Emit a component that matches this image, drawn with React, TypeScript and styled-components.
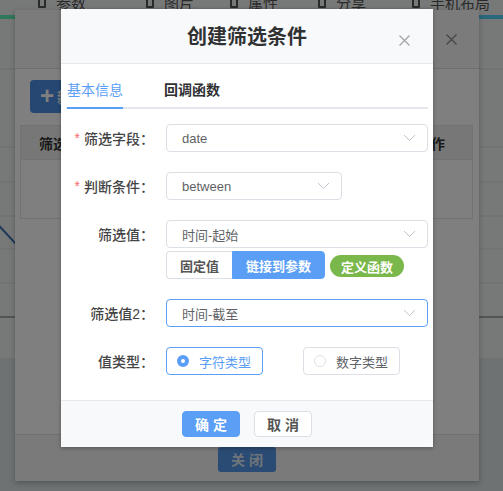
import React from "react";
import styled, { createGlobalStyle } from "styled-components";

const BLUE = "#5a9ef6";
const FONT = `"Liberation Sans", "Noto Sans CJK SC", sans-serif`;

const GlobalStyle = createGlobalStyle`
  html, body { margin: 0; padding: 0; }
  body { font-family: ${FONT}; }
  * { box-sizing: border-box; }
`;

const topTabs = [
  { label: "参数", ml: 38 },
  { label: "图片", ml: 60 },
  { label: "属性", ml: 36 },
  { label: "分享", ml: 40 },
  { label: "手机布局", ml: 46 },
];

const fields = [
  { label: "筛选字段", required: true, value: "date", width: undefined },
  { label: "判断条件", required: true, value: "between", width: 176 },
];

function Chevron() {
  return (
    <ChevronIcon width="13" height="8" viewBox="0 0 13 8">
      <path d="M1 1l5.5 5.5L12 1" fill="none" stroke="#c0c4cc" strokeWidth="1" />
    </ChevronIcon>
  );
}

function CloseIcon({ color }: { color: string }) {
  return (
    <svg width="11" height="11" viewBox="0 0 11 11">
      <path d="M0.5 0.5l10 10M10.5 0.5l-10 10" stroke={color} strokeWidth="1.2" />
    </svg>
  );
}

function App() {
  return (
    <Page>
      <GlobalStyle />
      <TopBar>
        {topTabs.map(t => (
          <TopTab key={t.label} $ml={t.ml}>
            <TopIcon />
            {t.label}
          </TopTab>
        ))}
      </TopBar>
      <ColorBar />
      <ChartArea>
        <svg width="503" height="339" viewBox="0 0 503 339">
          {[50, 128, 163, 197, 230, 264].map(y => (
            <line key={y} x1="0" x2="503" y1={y} y2={y} stroke="#d9dcdc" strokeWidth="1" />
          ))}
          <line x1="0" x2="503" y1="298" y2="298" stroke="#8f9393" strokeWidth="1.5" />
          <path d="M-10 197L15 224L60 250L140 210" fill="none" stroke="#3d6fae" strokeWidth="2" />
        </svg>
      </ChartArea>
      <PageFooter />

      <BackDialog>
        <BackHeader>
          <CloseIcon color="#8a8a8a" />
        </BackHeader>
        <BackBody>
          <AddButton>
            <Plus>+</Plus>新增条件
          </AddButton>
          <Table>
            <TableHead>
              <span>筛选字段</span>
              <span />
              <span>操作</span>
            </TableHead>
            <TableRow />
          </Table>
        </BackBody>
        <BackFooter>
          <CloseButton>关 闭</CloseButton>
        </BackFooter>
      </BackDialog>

      <Mask />

      <Dialog>
        <Header>
          <Title>创建筛选条件</Title>
          <HeaderClose>
            <CloseIcon color="#a0a3a8" />
          </HeaderClose>
        </Header>
        <Body>
          <Tabs>
            <Tab $active>基本信息</Tab>
            <Tab>回调函数</Tab>
          </Tabs>
          <Form>
            {fields.map(f => (
              <Row key={f.label}>
                <Label>
                  {f.required && <Star>*</Star>}
                  {f.label}：
                </Label>
                <Select $width={f.width}>
                  {f.value}
                  <Chevron />
                </Select>
              </Row>
            ))}
            <Row>
              <Label>筛选值：</Label>
              <Stack>
                <Select>
                  时间-起始
                  <Chevron />
                </Select>
                <ButtonLine>
                  <Segment>固定值</Segment>
                  <Segment $active>链接到参数</Segment>
                  <Pill>定义函数</Pill>
                </ButtonLine>
              </Stack>
            </Row>
            <Row>
              <Label>筛选值2：</Label>
              <Select $focused>
                时间-截至
                <Chevron />
              </Select>
            </Row>
            <Row>
              <Label>值类型：</Label>
              <RadioGroup>
                <RadioBox $checked>
                  <RadioDot $checked />
                  字符类型
                </RadioBox>
                <RadioBox>
                  <RadioDot />
                  数字类型
                </RadioBox>
              </RadioGroup>
            </Row>
          </Form>
        </Body>
        <Footer>
          <FooterButton $primary>确 定</FooterButton>
          <FooterButton>取 消</FooterButton>
        </Footer>
      </Dialog>
    </Page>
  );
}

export default App;

const Page = styled.div`
  position: relative;
  width: 503px;
  height: 491px;
  overflow: hidden;
  background: #eff3f3;
  font-family: ${FONT};
`;

const TopBar = styled.div`
  display: flex;
  align-items: center;
  height: 20px;
  margin-top: -8px;
  font-size: 15px;
  color: #555;
`;

const TopTab = styled.div<{ $ml: number }>`
  display: flex;
  align-items: center;
  gap: 10px;
  margin-left: ${p => p.$ml}px;
`;

const TopIcon = styled.span`
  width: 8px;
  height: 12px;
  border: 2px solid #555;
  border-radius: 1px;
`;

const ColorBar = styled.div`
  height: 4px;
  margin-top: 3px;
  background: linear-gradient(90deg, #5ef2b4 0%, #57c9e0 50%, #54d2fb 100%);
`;

const ChartArea = styled.div`
  height: 339px;
  svg {
    display: block;
  }
`;

const PageFooter = styled.div`
  height: 140px;
  background: #dde4e4;
`;

const BackDialog = styled.div`
  position: absolute;
  left: 15px;
  top: 10px;
  width: 464px;
  height: 471px;
  display: flex;
  flex-direction: column;
  background: #fff;
  box-shadow: 0 2px 6px rgba(0, 0, 0, 0.25);
`;

const BackHeader = styled.div`
  height: 59px;
  display: flex;
  align-items: center;
  justify-content: flex-end;
  padding-right: 22px;
  background: #f7f7f7;
  border-bottom: 1px solid #dcdcdc;
`;

const BackBody = styled.div`
  flex: 1;
  padding: 11px 6px 0 5px;
`;

const AddButton = styled.div`
  width: 110px;
  height: 33px;
  margin-left: 10px;
  display: flex;
  align-items: center;
  gap: 3px;
  padding-left: 10px;
  border-radius: 4px;
  background: #4b8ee4;
  color: #fff;
  font-size: 15px;
  font-weight: 700;
`;

const Plus = styled.span`
  font-size: 24px;
  line-height: 1;
  margin-top: -2px;
`;

const Table = styled.div`
  margin-top: 12px;
  border: 1px solid #e4e4e4;
`;

const TableHead = styled.div`
  display: grid;
  grid-template-columns: 110px 1fr 82px;
  align-items: center;
  height: 33px;
  padding-left: 18px;
  background: #eeeeee;
  font-size: 14px;
  font-weight: 700;
  color: #333;

  span:last-child {
    text-align: center;
  }
`;

const TableRow = styled.div`
  height: 59px;
  border-top: 1px solid #e4e4e4;
`;

const BackFooter = styled.div`
  height: 47px;
  display: flex;
  align-items: center;
  justify-content: center;
  padding-top: 2px;
  background: #f5f5f5;
  border-top: 1px solid #e0e0e0;
`;

const CloseButton = styled.div`
  width: 58px;
  height: 25px;
  display: flex;
  align-items: center;
  justify-content: center;
  border-radius: 3px;
  background: #5596e8;
  color: #dfe8f4;
  font-size: 14px;
  font-weight: 700;
`;

const Mask = styled.div`
  position: absolute;
  inset: 0;
  background: rgba(0, 0, 0, 0.5);
`;

const Dialog = styled.div`
  position: absolute;
  left: 61px;
  top: 9px;
  width: 372px;
  height: 438px;
  display: flex;
  flex-direction: column;
  background: #fff;
  box-shadow: 0 1px 4px rgba(0, 0, 0, 0.3);
`;

const Header = styled.div`
  position: relative;
  height: 55px;
  display: flex;
  align-items: center;
  justify-content: center;
  padding-bottom: 2px;
  background: #f8f9fb;
  border-bottom: 1px solid #e6e8ec;
`;

const Title = styled.h1`
  margin: 0;
  font-size: 20px;
  font-weight: 700;
  color: #303133;
`;

const HeaderClose = styled.div`
  position: absolute;
  right: 23px;
  top: 26px;
  display: flex;
`;

const Body = styled.div`
  flex: 1;
  padding: 0 5px;
`;

const Tabs = styled.div`
  display: flex;
  gap: 41px;
  padding-left: 1px;
  border-bottom: 2px solid #e4e7ed;
`;

const Tab = styled.div<{ $active?: boolean }>`
  padding: 16px 0 7px;
  margin-bottom: -2px;
  font-size: 14px;
  line-height: 20px;
  font-weight: ${p => (p.$active ? 400 : 700)};
  color: ${p => (p.$active ? BLUE : "#303133")};
  border-bottom: 2px solid ${p => (p.$active ? BLUE : "transparent")};
`;

const Form = styled.div`
  display: flex;
  flex-direction: column;
  gap: 20px;
  padding-top: 15px;
`;

const Row = styled.div`
  display: grid;
  grid-template-columns: 100px 1fr;
  align-items: start;
`;

const Label = styled.div`
  height: 28px;
  display: flex;
  align-items: center;
  justify-content: flex-end;
  padding-right: 12px;
  font-size: 14px;
  font-weight: 500;
  color: #444;
  white-space: nowrap;
`;

const Star = styled.span`
  margin-right: 4px;
  color: #f56c6c;
  font-weight: 400;
`;

const Select = styled.div<{ $width?: number; $focused?: boolean }>`
  width: ${p => (p.$width ? `${p.$width}px` : "100%")};
  height: 28px;
  display: flex;
  align-items: center;
  padding: 0 11px 0 15px;
  border: 1px solid ${p => (p.$focused ? BLUE : "#dcdfe6")};
  border-radius: 4px;
  font-size: 13px;
  color: #606266;
`;

const ChevronIcon = styled.svg`
  margin-left: auto;
`;

const Stack = styled.div`
  display: flex;
  flex-direction: column;
  gap: 3px;
`;

const ButtonLine = styled.div`
  display: flex;
  align-items: center;
`;

const Segment = styled.div<{ $active?: boolean }>`
  height: 28px;
  display: flex;
  align-items: center;
  padding: 0 13px;
  font-size: 13px;
  font-weight: 700;
  color: ${p => (p.$active ? "#fff" : "#555")};
  background: ${p => (p.$active ? BLUE : "#fff")};
  border: 1px solid ${p => (p.$active ? BLUE : "#dcdfe6")};

  &:first-child {
    border-radius: 4px 0 0 4px;
    border-right: none;
  }
  &:nth-child(2) {
    border-radius: 0 4px 4px 0;
  }
`;

const Pill = styled.div`
  height: 22px;
  margin: 2px 0 0 5px;
  display: flex;
  align-items: center;
  padding: 0 11px;
  border-radius: 11px;
  background: #7ab84b;
  color: #fff;
  font-size: 13px;
  font-weight: 700;
`;

const RadioGroup = styled.div`
  display: flex;
  gap: 40px;
`;

const RadioBox = styled.div<{ $checked?: boolean }>`
  height: 28px;
  display: flex;
  align-items: center;
  gap: 10px;
  padding: 0 11px 0 10px;
  border: 1px solid ${p => (p.$checked ? BLUE : "#dcdfe6")};
  border-radius: 4px;
  font-size: 13px;
  color: ${p => (p.$checked ? BLUE : "#606266")};
`;

const RadioDot = styled.span<{ $checked?: boolean }>`
  width: 12px;
  height: 12px;
  border-radius: 50%;
  background: #fff;
  border: ${p => (p.$checked ? `4px solid ${BLUE}` : "1px solid #dcdfe6")};
`;

const Footer = styled.div`
  height: 47px;
  display: flex;
  align-items: center;
  justify-content: center;
  gap: 14px;
  background: #f8f9fb;
  border-top: 1px solid #e6e8ec;
`;

const FooterButton = styled.div<{ $primary?: boolean }>`
  width: 58px;
  height: 26px;
  display: flex;
  align-items: center;
  justify-content: center;
  border-radius: 4px;
  font-size: 14px;
  font-weight: 700;
  color: ${p => (p.$primary ? "#fff" : "#555")};
  background: ${p => (p.$primary ? BLUE : "#fff")};
  border: 1px solid ${p => (p.$primary ? BLUE : "#dcdfe6")};
`;
